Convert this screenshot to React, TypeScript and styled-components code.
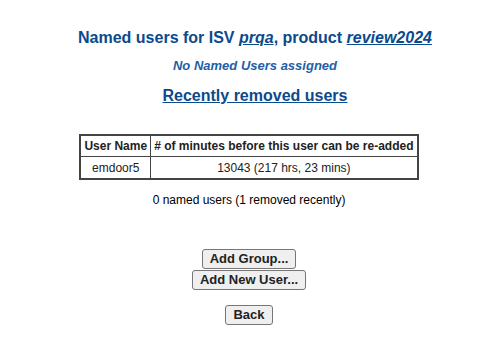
import React from 'react';
import styled, { createGlobalStyle } from 'styled-components';

const GlobalStyle = createGlobalStyle`
  body {
    margin: 0;
    background: #ffffff;
    font-family: "Liberation Sans", Arial, sans-serif;
  }
`;

const Page = styled.div`
  display: flex;
  flex-direction: column;
  align-items: center;
  padding-top: 28px;
  color: #000;
`;

const Heading = styled.div`
  display: flex;
  flex-direction: column;
  align-items: center;
  padding-left: 12px;
`;

const Title = styled.h2`
  margin: 0;
  font-size: 16px;
  line-height: 19px;
  font-weight: bold;
  color: #0b4a8c;
`;

const TitleLink = styled.a`
  color: #0b4a8c;
  font-style: italic;
  text-decoration: underline;
`;

const Notice = styled.div`
  margin-top: 11px;
  font-size: 13px;
  line-height: 16px;
  font-weight: bold;
  font-style: italic;
  color: #1f5fa6;
`;

const SectionLink = styled.a`
  margin-top: 12px;
  font-size: 16px;
  line-height: 19px;
  font-weight: bold;
  color: #0b4a8c;
  text-decoration: underline;
`;

const Table = styled.table`
  margin-top: 29px;
  border-collapse: collapse;
  border: 2px solid #444;
  font-size: 12px;
`;

const HeadCell = styled.th`
  border: 1px solid #444;
  padding: 2px 3px;
  height: 16px;
  font-weight: bold;
  color: #222;
`;

const Cell = styled.td`
  border: 1px solid #444;
  padding: 2px 3px;
  height: 17px;
  text-align: center;
  color: #222;
`;

const Summary = styled.div`
  margin-top: 13px;
  font-size: 12px;
  line-height: 15px;
`;

const Actions = styled.div`
  display: flex;
  flex-direction: column;
  align-items: center;
  margin-top: 41px;
  gap: 1px;
`;

const Button = styled.button<{ $gap?: number }>`
  margin-top: ${p => p.$gap ?? 0}px;
  font-family: "Liberation Sans", Arial, sans-serif;
  font-size: 13px;
  font-weight: bold;
  color: #222;
  background: #efefef;
  border: 1px solid #767676;
  border-radius: 3px;
  padding: 1px 7px;
  line-height: 16px;
`;

export default function App() {
  return (
    <>
      <GlobalStyle />
      <Page>
        <Heading>
          <Title>
            Named users for ISV <TitleLink href="#">prqa</TitleLink>, product{' '}
            <TitleLink href="#">review2024</TitleLink>
          </Title>
          <Notice>No Named Users assigned</Notice>
          <SectionLink href="#">Recently removed users</SectionLink>
        </Heading>
        <Table>
          <thead>
            <tr>
              <HeadCell>User Name</HeadCell>
              <HeadCell># of minutes before this user can be re-added</HeadCell>
            </tr>
          </thead>
          <tbody>
            <tr>
              <Cell>emdoor5</Cell>
              <Cell>13043 (217 hrs, 23 mins)</Cell>
            </tr>
          </tbody>
        </Table>
        <Summary>0 named users (1 removed recently)</Summary>
        <Actions>
          <Button>Add Group...</Button>
          <Button>Add New User...</Button>
          <Button $gap={14}>Back</Button>
        </Actions>
      </Page>
    </>
  );
}
